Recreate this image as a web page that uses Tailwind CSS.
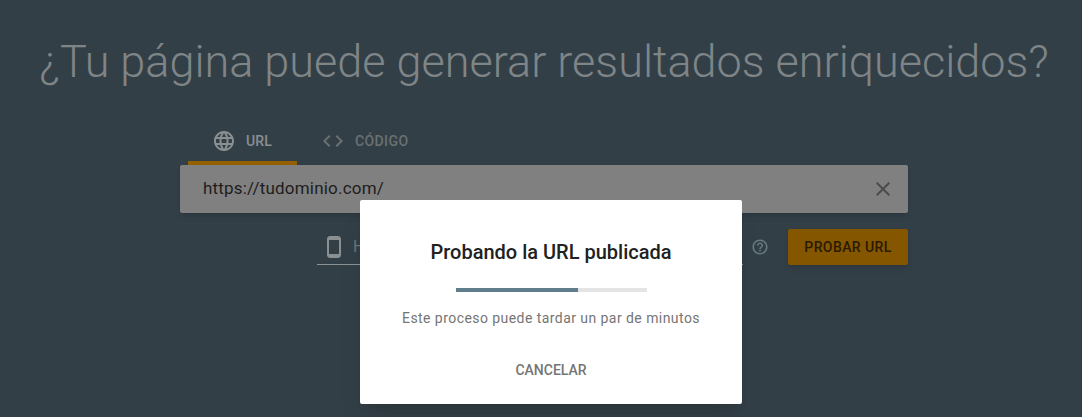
<!DOCTYPE html>
<html>
  <head>
    <meta charset="UTF-8" />
    <meta name="viewport" content="width=device-width, initial-scale=1.0" />
    <script src="https://cdn.jsdelivr.net/npm/@tailwindcss/browser@4"></script>
  </head>
  <body class="relative h-[417px] w-[1082px] overflow-hidden bg-[#333f47] font-['Roboto',sans-serif]">
    <main class="flex flex-col items-center pl-[6px]">
      <h1 class="mt-[30px] h-[64px] text-[45px] leading-[64px] font-light whitespace-nowrap text-[#7f8587]">
        ¿Tu página puede generar resultados enriquecidos?
      </h1>

      <div class="mt-[26px] w-[728px]">
        <div class="flex pl-2">
          <div class="flex h-[45px] w-[109px] items-center gap-[10px] border-b-4 border-[#945f00] pl-[24px] text-sm font-medium tracking-[0.2px] text-[#8a8f91]">
            <!-- globe -->
            <svg class="h-[24px] w-[24px]" viewBox="0 0 24 24" fill="currentColor">
              <path d="M11.99 2C6.47 2 2 6.48 2 12s4.47 10 9.99 10C17.52 22 22 17.52 22 12S17.52 2 11.99 2zm6.93 6h-2.95c-.32-1.25-.78-2.45-1.38-3.56 1.84.63 3.37 1.91 4.33 3.56zM12 4.04c.83 1.2 1.48 2.53 1.91 3.96h-3.82c.43-1.43 1.08-2.76 1.91-3.96zM4.26 14C4.1 13.36 4 12.69 4 12s.1-1.36.26-2h3.38c-.08.66-.14 1.32-.14 2s.06 1.34.14 2H4.26zm.82 2h2.95c.32 1.25.78 2.45 1.38 3.56-1.84-.63-3.37-1.9-4.33-3.56zm2.95-8H5.08c.96-1.66 2.49-2.93 4.33-3.56C8.81 5.55 8.35 6.75 8.03 8zM12 19.96c-.83-1.2-1.48-2.53-1.91-3.96h3.82c-.43 1.43-1.08 2.76-1.91 3.96zM14.34 14H9.66c-.09-.66-.16-1.32-.16-2s.07-1.35.16-2h4.68c.09.65.16 1.32.16 2s-.07 1.34-.16 2zm.25 5.56c.6-1.11 1.06-2.31 1.38-3.56h2.95c-.96 1.65-2.49 2.93-4.33 3.56zM16.36 14c.08-.66.14-1.32.14-2s-.06-1.34-.14-2h3.38c.16.64.26 1.31.26 2s-.1 1.36-.26 2h-3.38z" />
            </svg>
            <span>URL</span>
          </div>
          <div class="flex h-[41px] items-center gap-[10px] pl-[24px] text-sm font-medium tracking-[0.4px] text-[#697173]">
            <!-- code -->
            <svg class="h-[24px] w-[24px]" viewBox="0 0 24 24" fill="currentColor">
              <path d="M9.4 16.6 4.8 12l4.6-4.6L8 6l-6 6 6 6 1.4-1.4zm5.2 0 4.6-4.6-4.6-4.6L16 6l6 6-6 6-1.4-1.4z" />
            </svg>
            <span>CÓDIGO</span>
          </div>
        </div>

        <div class="flex h-12 items-center justify-between rounded-[2px] bg-[#808080] pr-[13px] pl-[23px] shadow-md">
          <span class="text-[17px] tracking-[0.2px] text-[#1d1d1d]">https://tudominio.com/</span>
          <svg class="h-[24px] w-[24px] text-[#4b4b4b]" viewBox="0 0 24 24" fill="currentColor">
            <path d="M19 6.41 17.59 5 12 10.59 6.41 5 5 6.41 10.59 12 5 17.59 6.41 19 12 13.41 17.59 19 19 17.59 13.41 12z" />
          </svg>
        </div>

        <div class="mt-4 flex h-9 items-center">
          <div class="ml-[137px] flex h-9 w-[426px] items-center gap-[7px] border-b border-[#8a9296] pl-[5px] text-base text-[#6c7578]">
            <!-- phone -->
            <svg class="h-[24px] w-[24px] text-[#8a8f91]" viewBox="0 0 24 24" fill="currentColor">
              <path d="M16 1H8C6.34 1 5 2.34 5 4v16c0 1.66 1.34 3 3 3h8c1.66 0 3-1.34 3-3V4c0-1.66-1.34-3-3-3zm1 18H7V5h10v14z" />
            </svg>
            <span>Hola</span>
          </div>
          <svg class="ml-2 h-[18px] w-[18px] text-[#697a83]" viewBox="0 0 24 24" fill="currentColor">
            <path d="M11 18h2v-2h-2v2zm1-16C6.48 2 2 6.48 2 12s4.48 10 10 10 10-4.48 10-10S17.52 2 12 2zm0 18c-4.41 0-8-3.59-8-8s3.59-8 8-8 8 3.59 8 8-3.59 8-8 8zm0-14c-2.21 0-4 1.79-4 4h2c0-1.1.9-2 2-2s2 .9 2 2c0 2-3 1.75-3 5h2c0-2.25 3-2.5 3-5 0-2.21-1.79-4-4-4z" />
          </svg>
          <button class="ml-auto h-9 w-[120px] rounded-[2px] bg-[#855600] text-sm font-medium tracking-[0.4px] text-[#291a00] shadow-md">
            PROBAR URL
          </button>
        </div>
      </div>
    </main>

    <!-- dialog over the page -->
    <div class="absolute top-[200px] left-[360px] flex h-[204px] w-[382px] flex-col items-center rounded-[2px] bg-white shadow-xl">
      <h2 class="mt-[38px] text-xl leading-[28px] font-medium text-[#212121]">Probando la URL publicada</h2>
      <div class="mt-[22px] h-1 w-[191px] bg-[#e4e4e4]">
        <div class="h-1 w-[64%] bg-[#607d8b]"></div>
      </div>
      <p class="mt-[16px] text-sm leading-5 tracking-[0.44px] text-[#757575]">Este proceso puede tardar un par de minutos</p>
      <button class="mt-[32px] text-sm leading-5 font-medium text-[#757575]">CANCELAR</button>
    </div>
  </body>
</html>
